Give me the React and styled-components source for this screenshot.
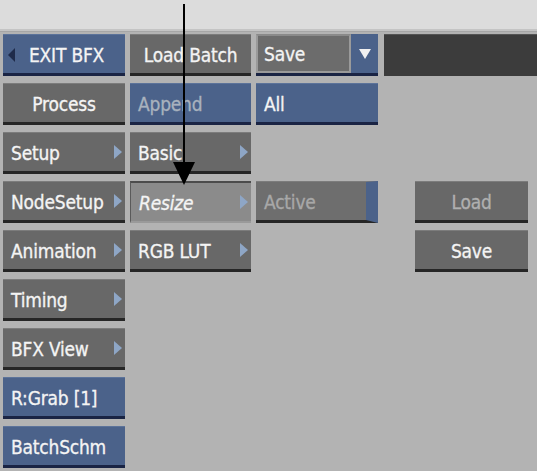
import React from 'react'
import styled, { createGlobalStyle, css } from 'styled-components'

const Global = createGlobalStyle`
  html, body { margin: 0; padding: 0; background: #b3b3b3; }
  body { width: 537px; height: 471px; overflow: hidden; font-family: "DejaVu Sans Condensed", "DejaVu Sans", sans-serif; }
`

const Screen = styled.div`
  position: relative;
  width: 537px;
  height: 471px;
  background: #b3b3b3;
  overflow: hidden;
`

const TopBand = styled.div`
  height: 29px;
  background: #dcdcdc;
  border-bottom: 2px solid #c4c4c4;
  box-shadow: 0 1px 0 #a6a6a6;
`

const Grid = styled.div`
  display: grid;
  grid-template-columns: 122px 121px 122px 1fr;
  grid-auto-rows: 42px;
  column-gap: 5px;
  row-gap: 7px;
  padding: 3px 0 0 3px;
`

const tones = {
  gray: css`
    background: #686868;
    border-top: 1px solid #7c7c7c;
    border-bottom: 3px solid #262626;
    color: #f4f4f4;
  `,
  light: css`
    background: #8b8b8b;
    border-top: 2px solid #4c4c4c;
    border-left: 1px solid #5a5a5a;
    border-bottom: 2px solid #9a9a9a;
    color: #f4f4f4;
  `,
  blue: css`
    background: #4b628a;
    border-top: 1px solid #5c739a;
    border-bottom: 3px solid #1a2444;
    color: #f4f4f4;
  `,
}

const label = css`
  font-size: 19px;
  letter-spacing: -0.2px;
  -webkit-text-stroke: 0.3px currentColor;
`

const Btn = styled.div`
  position: relative;
  box-sizing: border-box;
  display: flex;
  align-items: center;
  justify-content: ${({ $center }) => ($center ? 'center' : 'flex-start')};
  padding: 2px ${({ $center }) => ($center ? '0' : '8px')} 0;
  ${label}
  grid-column: ${({ $col }) => $col || 'auto'};
  grid-row: ${({ $row }) => $row || 'auto'};
  ${({ $tone }) => tones[$tone || 'gray']}
  ${({ $dim }) => $dim && css`color: #a9b2be;`}
  ${({ $dimGray }) => $dimGray && css`color: #b0b0b0;`}
  ${({ $italic }) => $italic && css`font-style: italic;`}
`

const RightTri = styled.span`
  position: absolute;
  right: 3px;
  top: 50%;
  margin-top: -7px;
  width: 0;
  height: 0;
  border-top: 7px solid transparent;
  border-bottom: 7px solid transparent;
  border-left: 8px solid #8ea6c6;
`

const LeftTri = styled.span`
  width: 0;
  height: 0;
  margin: 0 14px 0 -3px;
  border-top: 7px solid transparent;
  border-bottom: 7px solid transparent;
  border-right: 7px solid #1f2b4a;
`

const Dropdown = styled.div`
  display: flex;
  box-sizing: border-box;
  border-bottom: 3px solid #1a2444;
  grid-column: 3;
  grid-row: 1;
`

const DropField = styled.div`
  flex: 1;
  display: flex;
  align-items: center;
  padding: 1px 0 0 6px;
  background: #6c6c6c;
  border: 2px solid #9a9a9a;
  border-top-color: #8a8a8a;
  color: #f4f4f4;
  ${label}
`

const DropArrow = styled.div`
  width: 27px;
  background: #4b628a;
  display: flex;
  align-items: center;
  justify-content: center;
  &::after {
    content: "";
    border-left: 6px solid transparent;
    border-right: 6px solid transparent;
    border-top: 10px solid #f0f0f0;
  }
`

const DarkBar = styled.div`
  grid-column: 4;
  grid-row: 1;
  margin-left: 1px;
  background: #3c3c3c;
  border-top: 1px solid #555;
`

const ActiveBtn = styled(Btn)`
  border-right: 12px solid #4b628a;
  color: #a8a8a8;
  background: #6e6e6e;
`

const SideBtn = styled(Btn)`
  margin-left: 32px;
  width: 113px;
`

const Pointer = styled.svg`
  position: absolute;
  left: 172px;
  top: 4px;
  pointer-events: none;
`

export default function App() {
  return (
    <Screen>
      <Global />
      <TopBand />
      <Grid>
        <Btn $tone="blue" $col={1} $row={1}><LeftTri />EXIT BFX</Btn>
        <Btn $center $col={2} $row={1}>Load Batch</Btn>
        <Dropdown>
          <DropField>Save</DropField>
          <DropArrow />
        </Dropdown>
        <DarkBar />

        <Btn $center $col={1} $row={2}>Process</Btn>
        <Btn $tone="blue" $dim $col={2} $row={2}>Append</Btn>
        <Btn $tone="blue" $col={3} $row={2}>All</Btn>

        <Btn $col={1} $row={3}>Setup<RightTri /></Btn>
        <Btn $col={2} $row={3}>Basic<RightTri /></Btn>

        <Btn $col={1} $row={4}>NodeSetup<RightTri /></Btn>
        <Btn $tone="light" $italic $col={2} $row={4}>Resize<RightTri /></Btn>
        <ActiveBtn $col={3} $row={4}>Active</ActiveBtn>
        <SideBtn $center $dimGray $col={4} $row={4}>Load</SideBtn>

        <Btn $col={1} $row={5}>Animation<RightTri /></Btn>
        <Btn $col={2} $row={5}>RGB LUT<RightTri /></Btn>
        <SideBtn $center $col={4} $row={5}>Save</SideBtn>

        <Btn $col={1} $row={6}>Timing<RightTri /></Btn>
        <Btn $col={1} $row={7}>BFX View<RightTri /></Btn>
        <Btn $tone="blue" $col={1} $row={8}>R:Grab [1]</Btn>
        <Btn $tone="blue" $col={1} $row={9}>BatchSchm</Btn>
      </Grid>
      <Pointer width="24" height="182" viewBox="0 0 24 182">
        <line x1="12" y1="0" x2="12" y2="162" stroke="#000" strokeWidth="2" />
        <polygon points="1,158 23,158 12,181" fill="#000" />
      </Pointer>
    </Screen>
  )
}
